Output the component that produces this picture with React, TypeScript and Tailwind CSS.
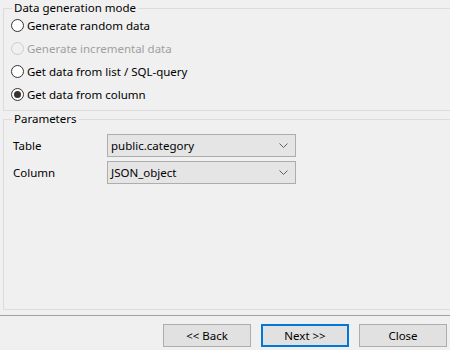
import React from 'react'

const font = { fontFamily: '"Noto Sans", "Open Sans", Arial, sans-serif' }

// Windows-style radio bullet
const Radio = ({ checked = false, disabled = false }: { checked?: boolean; disabled?: boolean }) => (
  <span
    className={`flex items-center justify-center w-[13px] h-[13px] rounded-full border ${
      disabled ? 'border-[#cccccc] bg-[#f0f0f0]' : 'border-[#333333] bg-white'
    }`}
  >
    {checked && <span className="block w-[7px] h-[7px] rounded-full bg-[#333333]" />}
  </span>
)

const Chevron = () => (
  <svg width="9" height="5" viewBox="0 0 9 5" className="text-[#606060]">
    <path d="M0.5 0.5 L4.5 4.5 L8.5 0.5" fill="none" stroke="currentColor" strokeWidth="1" />
  </svg>
)

const Combo = ({ value }: { value: string }) => (
  <div className="flex items-center justify-between w-[189px] h-[23px] pl-[3px] pr-[7px] bg-[#e5e5e5] border border-[#adadad]">
    <span>{value}</span>
    <Chevron />
  </div>
)

const modes = [
  { label: 'Generate random data' },
  { label: 'Generate incremental data', disabled: true },
  { label: 'Get data from list / SQL-query' },
  { label: 'Get data from column', checked: true },
]

export default function App() {
  return (
    <div
      className="w-[450px] h-[350px] bg-[#f0f0f0] text-[11.5px] text-black overflow-hidden flex flex-col"
      style={font}
    >
      {/* Data generation mode */}
      <fieldset className="ml-[3px] border border-r-0 border-[#dcdcdc]">
        <legend className="ml-[8px] px-[2px] leading-[16px]">Data generation mode</legend>
        <div className="flex flex-col -mt-[2px] pl-[7px] pb-[4px]">
          {modes.map((m) => (
            <div key={m.label} className="flex items-center h-[23px] gap-[3px]">
              <Radio checked={m.checked} disabled={m.disabled} />
              <span className={m.disabled ? 'text-[#a0a0a0]' : ''}>{m.label}</span>
            </div>
          ))}
        </div>
      </fieldset>

      {/* Parameters */}
      <fieldset className="ml-[3px] h-[199px] border border-r-0 border-[#dcdcdc]">
        <legend className="ml-[8px] px-[2px] leading-[16px]">Parameters</legend>
        <div className="flex flex-col gap-[4px] pt-[7px] pl-[9px]">
          <div className="flex items-center">
            <span className="w-[94px]">Table</span>
            <Combo value="public.category" />
          </div>
          <div className="flex items-center">
            <span className="w-[94px]">Column</span>
            <Combo value="JSON_object" />
          </div>
        </div>
      </fieldset>

      <div className="mt-[5px] h-px bg-[#a0a0a0]" />

      {/* Wizard buttons */}
      <div className="flex justify-end gap-[10px] mt-[8px] pr-[3px]">
        <button className="w-[88px] h-[23px] bg-[#e1e1e1] border border-[#adadad]">&lt;&lt; Back</button>
        <button className="w-[88px] h-[23px] bg-[#e1e1e1] border-2 border-[#0078d7]">Next &gt;&gt;</button>
        <button className="w-[88px] h-[23px] bg-[#e1e1e1] border border-[#adadad]">Close</button>
      </div>
    </div>
  )
}
